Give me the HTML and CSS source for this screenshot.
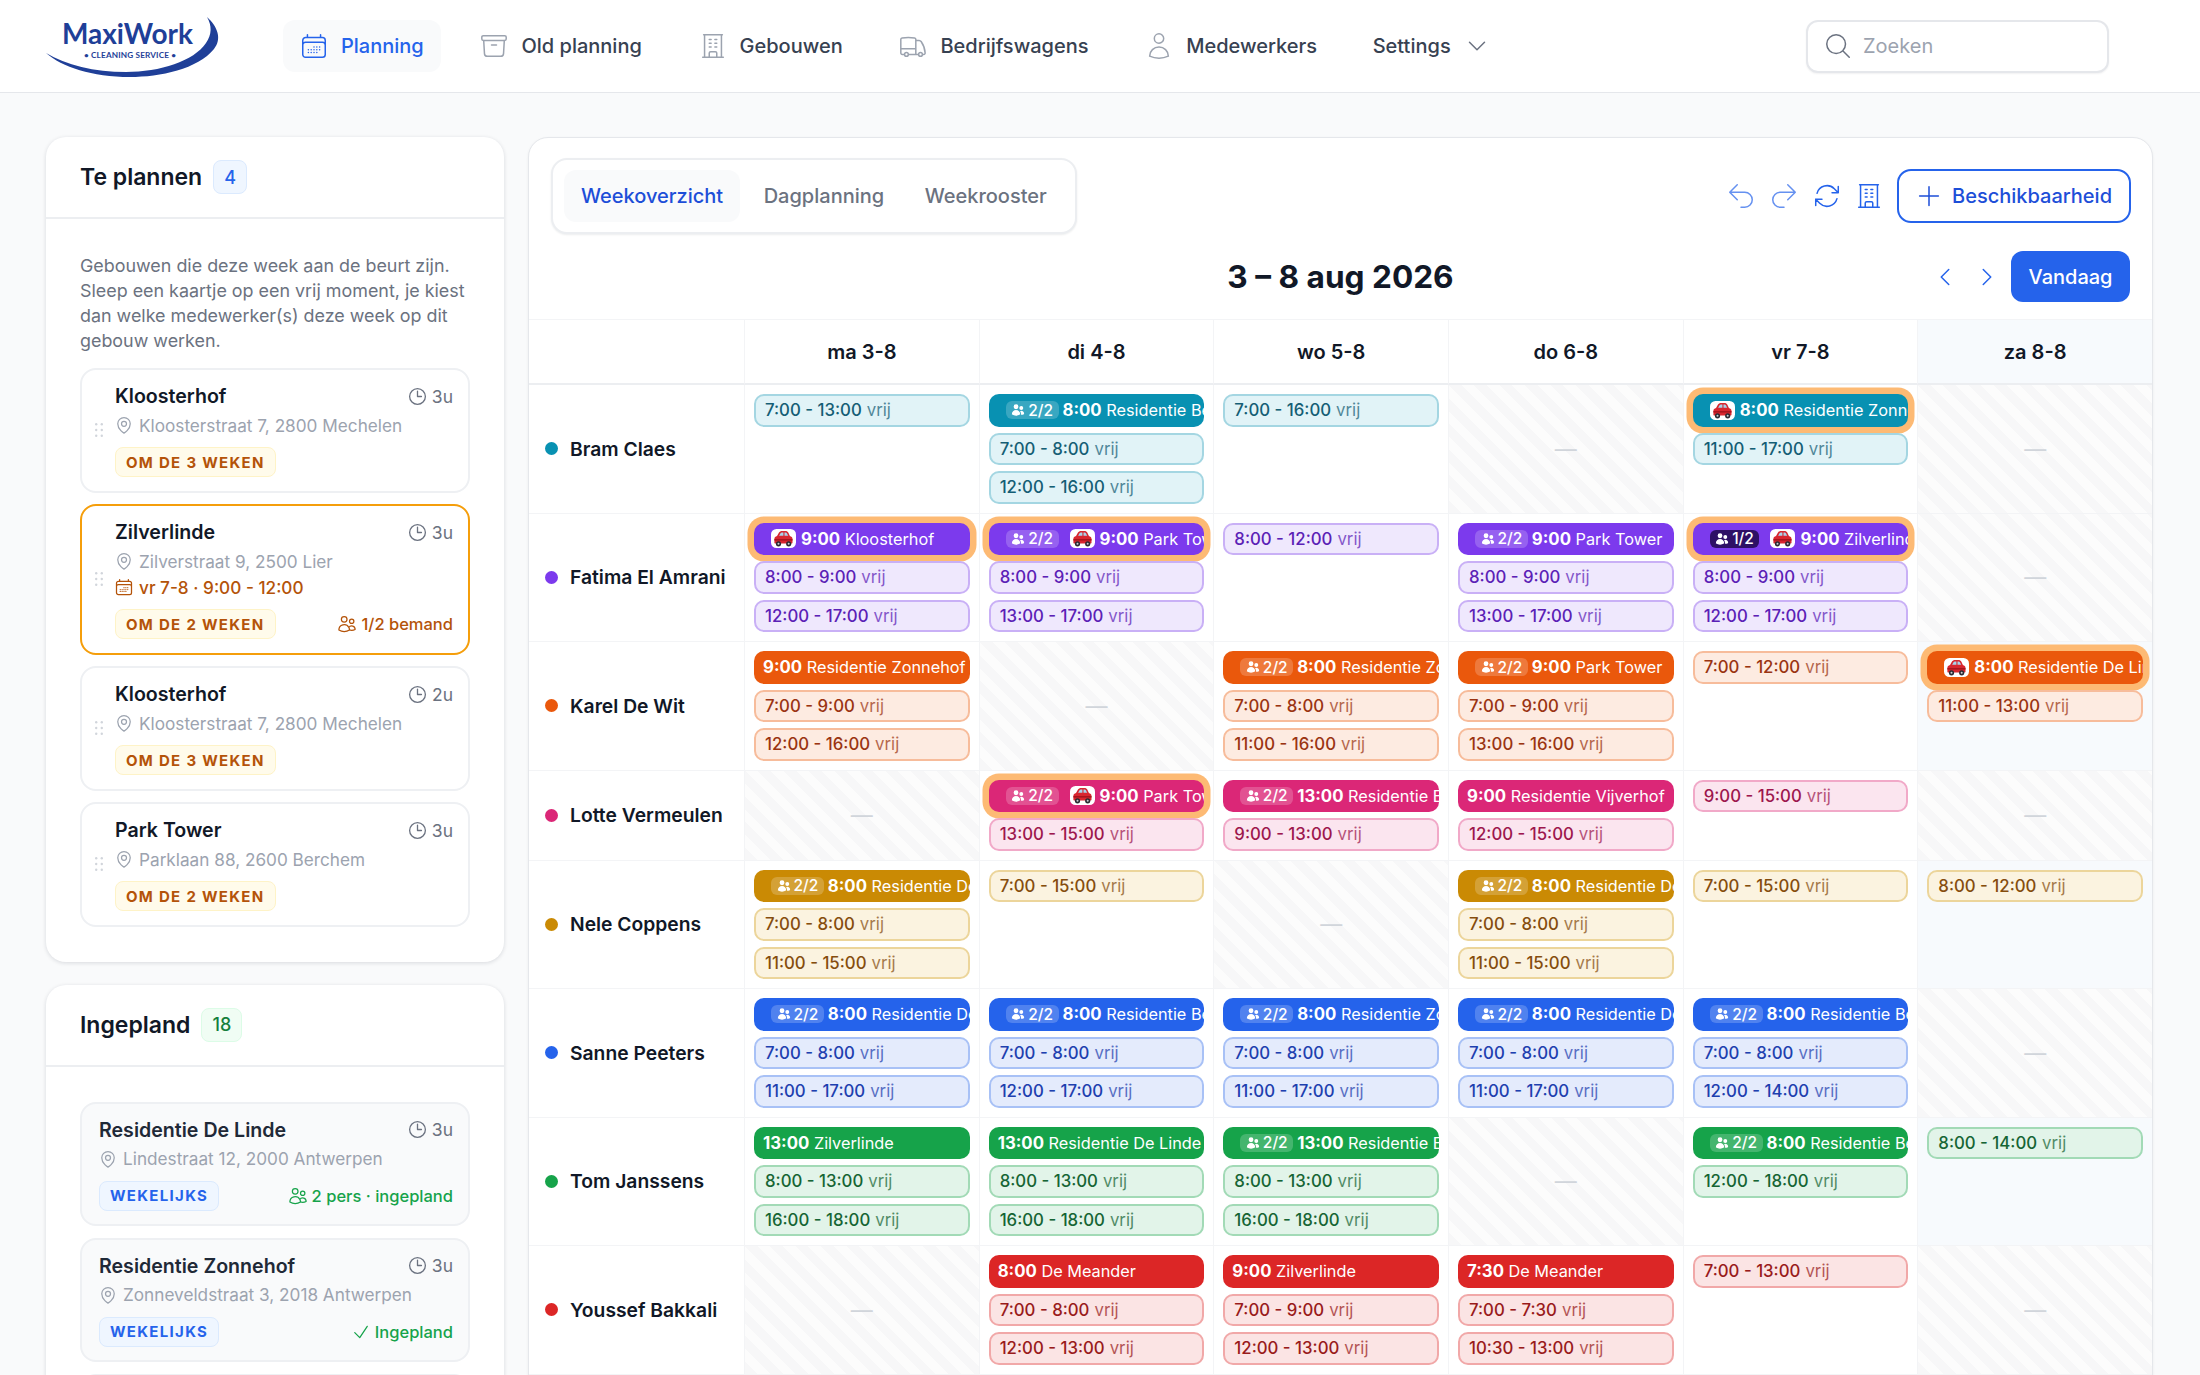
FILE: index.html
```
<!DOCTYPE html>
<html lang="nl">
<head>
<meta charset="utf-8">
<title>MaxiWork Planning</title>
<link rel="stylesheet" href="styles.css">
</head>
<body>
<svg class="defs" width="0" height="0" aria-hidden="true">
  <symbol id="i-cal" viewBox="0 0 24 24"><path d="M6.75 3v2.25M17.25 3v2.25M3 18.75V7.5a2.25 2.25 0 0 1 2.25-2.25h13.5A2.25 2.25 0 0 1 21 7.5v11.25m-18 0A2.25 2.25 0 0 0 5.25 21h13.5A2.25 2.25 0 0 0 21 18.75m-18 0v-7.5A2.25 2.25 0 0 1 5.25 9h13.5A2.25 2.25 0 0 1 21 11.25v7.5m-9-6h.008v.008H12v-.008ZM12 15h.008v.008H12V15Zm0 2.25h.008v.008H12v-.008ZM9.75 15h.008v.008H9.75V15Zm0 2.25h.008v.008H9.75v-.008ZM7.5 15h.008v.008H7.5V15Zm0 2.25h.008v.008H7.5v-.008Zm6.75-4.5h.008v.008h-.008v-.008Zm0 2.25h.008v.008h-.008V15Zm0 2.25h.008v.008h-.008v-.008Zm2.25-4.5h.008v.008H16.5v-.008Zm0 2.25h.008v.008H16.5V15Z"/></symbol>
  <symbol id="i-box" viewBox="0 0 24 24"><path d="m20.25 7.5-.625 10.632a2.25 2.25 0 0 1-2.247 2.118H6.622a2.25 2.25 0 0 1-2.247-2.118L3.75 7.5M10 11.25h4M3.375 7.5h17.25c.621 0 1.125-.504 1.125-1.125v-1.5c0-.621-.504-1.125-1.125-1.125H3.375c-.621 0-1.125.504-1.125 1.125v1.5c0 .621.504 1.125 1.125 1.125Z"/></symbol>
  <symbol id="i-building" viewBox="0 0 24 24"><path d="M3.75 21h16.5M4.5 3h15M5.25 3v18m13.5-18v18M9 6.75h1.5m-1.5 3h1.5m-1.5 3h1.5m3-6H15m-1.5 3H15m-1.5 3H15M9 21v-3.375c0-.621.504-1.125 1.125-1.125h3.75c.621 0 1.125.504 1.125 1.125V21"/></symbol>
  <symbol id="i-truck" viewBox="0 0 24 24"><path d="M8.25 18.75a1.5 1.5 0 0 1-3 0m3 0a1.5 1.5 0 0 0-3 0m3 0h6m-9 0H3.375a1.125 1.125 0 0 1-1.125-1.125V14.25m17.25 4.5a1.5 1.5 0 0 1-3 0m3 0a1.5 1.5 0 0 0-3 0m3 0h1.125c.621 0 1.129-.504 1.09-1.124a17.902 17.902 0 0 0-3.213-9.193 2.056 2.056 0 0 0-1.58-.86H14.25M16.5 18.75h-2.25m0-11.177v-.958c0-.568-.422-1.048-.987-1.106a48.554 48.554 0 0 0-10.026 0 1.106 1.106 0 0 0-.987 1.106v7.635m12-6.677v6.677m0 4.5v-4.5m0 0h-12"/></symbol>
  <symbol id="i-user" viewBox="0 0 24 24"><path d="M15.75 6a3.75 3.75 0 1 1-7.5 0 3.75 3.75 0 0 1 7.5 0ZM4.501 20.118a7.5 7.5 0 0 1 14.998 0A17.933 17.933 0 0 1 12 21.75c-2.676 0-5.216-.584-7.499-1.632Z"/></symbol>
  <symbol id="i-search" viewBox="0 0 24 24"><path d="m21 21-5.197-5.197m0 0A7.5 7.5 0 1 0 5.196 5.196a7.5 7.5 0 0 0 10.607 10.607Z"/></symbol>
  <symbol id="i-down" viewBox="0 0 24 24"><path d="m19.5 8.25-7.5 7.5-7.5-7.5"/></symbol>
  <symbol id="i-left" viewBox="0 0 24 24"><path d="M15.75 19.5 8.25 12l7.5-7.5"/></symbol>
  <symbol id="i-right" viewBox="0 0 24 24"><path d="m8.25 4.5 7.5 7.5-7.5 7.5"/></symbol>
  <symbol id="i-undo" viewBox="0 0 24 24"><path d="M9 15 3 9m0 0 6-6M3 9h12a6 6 0 0 1 0 12h-3"/></symbol>
  <symbol id="i-redo" viewBox="0 0 24 24"><path d="m15 15 6-6m0 0-6-6m6 6H9a6 6 0 0 0 0 12h3"/></symbol>
  <symbol id="i-refresh" viewBox="0 0 24 24"><path d="M16.023 9.348h4.992v-.001M2.985 19.644v-4.992m0 0h4.992m-4.993 0 3.181 3.183a8.25 8.25 0 0 0 13.803-3.7M4.031 9.865a8.25 8.25 0 0 1 13.803-3.7l3.181 3.182m0-4.991v4.99"/></symbol>
  <symbol id="i-plus" viewBox="0 0 24 24"><path d="M12 4.5v15m7.5-7.5h-15"/></symbol>
  <symbol id="i-clock" viewBox="0 0 24 24"><path d="M12 6v6h4.5m4.5 0a9 9 0 1 1-18 0 9 9 0 0 1 18 0Z"/></symbol>
  <symbol id="i-pin" viewBox="0 0 24 24"><path d="M15 10.5a3 3 0 1 1-6 0 3 3 0 0 1 6 0Z"/><path d="M19.5 10.5c0 7.142-7.5 11.25-7.5 11.25S4.5 17.642 4.5 10.5a7.5 7.5 0 1 1 15 0Z"/></symbol>
  <symbol id="i-users" viewBox="0 0 24 24"><path d="M15 19.128a9.38 9.38 0 0 0 2.625.372 9.337 9.337 0 0 0 4.121-.952 4.125 4.125 0 0 0-7.533-2.493M15 19.128v-.003c0-1.113-.285-2.16-.786-3.07M15 19.128v.106A12.318 12.318 0 0 1 8.624 21c-2.331 0-4.512-.645-6.374-1.766l-.001-.109a6.375 6.375 0 0 1 11.964-3.07M12 6.375a3.375 3.375 0 1 1-6.75 0 3.375 3.375 0 0 1 6.75 0Zm8.25 2.25a2.625 2.625 0 1 1-5.25 0 2.625 2.625 0 0 1 5.25 0Z"/></symbol>
  <symbol id="i-check" viewBox="0 0 24 24"><path d="m4.5 12.75 6 6 9-13.5"/></symbol>
  <symbol id="i-crew" viewBox="0 0 24 24"><path d="M4.5 6.375a4.125 4.125 0 1 1 8.25 0 4.125 4.125 0 0 1-8.25 0ZM14.25 8.625a3.375 3.375 0 1 1 6.75 0 3.375 3.375 0 0 1-6.75 0ZM1.5 19.125a7.125 7.125 0 0 1 14.25 0v.003l-.001.119a.75.75 0 0 1-.363.63 13.067 13.067 0 0 1-6.761 1.873c-2.472 0-4.786-.684-6.76-1.873a.75.75 0 0 1-.364-.63l-.001-.122ZM17.25 19.128l-.001.144a2.25 2.25 0 0 1-.233.96 10.088 10.088 0 0 0 5.06-1.01.75.75 0 0 0 .42-.643 4.875 4.875 0 0 0-6.957-4.611 8.586 8.586 0 0 1 1.71 5.157v.003Z"/></symbol>
  <symbol id="i-car" viewBox="0 0 25 19">
    <rect width="25" height="19" rx="5.5" fill="#fff"/>
    <path d="M8 3.600C8.600 2.500 9.700 2 11 2h3.400c1.300 0 2.400.6 3 1.700l1.500 3.300c1.500.4 2.600 1.400 2.600 2.800v3.700c0 .6-.4 1-1 1H4.400c-.6 0-1-.4-1-1V9.800C3.400 8.500 4.500 7.400 6 7z" fill="#d8262f"/>
    <path d="M9.500 4.200c.3-.5.800-.8 1.400-.8h1.500v3.400H8.100zM13.500 3.400h1c.6 0 1.100.3 1.400.8l1.300 2.600h-3.700z" fill="#a9d3ea"/>
    <rect x="3.400" y="10" width="18.100" height="1.600" fill="#a8141d"/>
    <circle cx="7.500" cy="14.800" r="2.600" fill="#2b2b33"/><circle cx="17.700" cy="14.800" r="2.600" fill="#2b2b33"/>
    <circle cx="7.500" cy="14.800" r="1" fill="#c9ccd2"/><circle cx="17.700" cy="14.800" r="1" fill="#c9ccd2"/>
  </symbol>
  <symbol id="i-grip" viewBox="0 0 8 14">
    <circle cx="1.200" cy="1.200" r="1.200"/><circle cx="6.800" cy="1.200" r="1.200"/><circle cx="1.200" cy="7" r="1.200"/><circle cx="6.800" cy="7" r="1.200"/><circle cx="1.200" cy="12.800" r="1.200"/><circle cx="6.800" cy="12.800" r="1.200"/>
  </symbol>
</svg>

<header class="topbar">
  <svg class="logo" viewBox="0 0 240 90" width="240" height="90" role="img" aria-label="MaxiWork Cleaning Service">
    <path class="logo-swoosh" d="M177 16C188 26 192 38 184 48C168 68 130 76 100 76C62 76 32 66 16 52C36 64 64 71 96 71C130 71 164 60 176 42C182 33 182 25 177 16Z"/>
    <text class="logo-name" x="32" y="43" textLength="131">MaxiWork</text>
    <text class="logo-sub" x="54" y="56.500" textLength="92">• CLEANING SERVICE •</text>
  </svg>
  <nav class="nav">
    <a class="nav-item active"><svg class="ic nav-ic"><use href="#i-cal"/></svg>Planning</a>
    <a class="nav-item"><svg class="ic nav-ic"><use href="#i-box"/></svg>Old planning</a>
    <a class="nav-item"><svg class="ic nav-ic"><use href="#i-building"/></svg>Gebouwen</a>
    <a class="nav-item"><svg class="ic nav-ic"><use href="#i-truck"/></svg>Bedrijfswagens</a>
    <a class="nav-item"><svg class="ic nav-ic"><use href="#i-user"/></svg>Medewerkers</a>
    <a class="nav-item">Settings<svg class="ic nav-chev"><use href="#i-down"/></svg></a>
  </nav>
  <div class="search"><svg class="ic search-ic"><use href="#i-search"/></svg><span>Zoeken</span></div>
</header>

<main class="layout">
  <aside class="side">
    <section class="panel">
      <div class="panel-head"><h2>Te plannen</h2><span class="count count-blue">4</span></div>
      <div class="panel-body">
        <p class="intro">Gebouwen die deze week aan de beurt zijn. Sleep een kaartje op een vrij moment, je kiest dan welke medewerker(s) deze week op dit gebouw werken.</p>
        <div class="cards">
          <article class="job">
            <svg class="grip"><use href="#i-grip"/></svg>
            <div class="job-top"><h3>Kloosterhof</h3><span class="dur"><svg class="ic"><use href="#i-clock"/></svg>3u</span></div>
            <div class="addr"><svg class="ic"><use href="#i-pin"/></svg>Kloosterstraat 7, 2800 Mechelen</div>
            <div class="job-meta"><span class="tag tag-amber">OM DE 3 WEKEN</span></div>
          </article>
          <article class="job job-open">
            <svg class="grip"><use href="#i-grip"/></svg>
            <div class="job-top"><h3>Zilverlinde</h3><span class="dur"><svg class="ic"><use href="#i-clock"/></svg>3u</span></div>
            <div class="addr"><svg class="ic"><use href="#i-pin"/></svg>Zilverstraat 9, 2500 Lier</div>
            <div class="when"><svg class="ic"><use href="#i-cal"/></svg>vr 7-8 · 9:00 - 12:00</div>
            <div class="job-meta"><span class="tag tag-amber">OM DE 2 WEKEN</span><span class="state state-amber"><svg class="ic"><use href="#i-users"/></svg>1/2 bemand</span></div>
          </article>
          <article class="job">
            <svg class="grip"><use href="#i-grip"/></svg>
            <div class="job-top"><h3>Kloosterhof</h3><span class="dur"><svg class="ic"><use href="#i-clock"/></svg>2u</span></div>
            <div class="addr"><svg class="ic"><use href="#i-pin"/></svg>Kloosterstraat 7, 2800 Mechelen</div>
            <div class="job-meta"><span class="tag tag-amber">OM DE 3 WEKEN</span></div>
          </article>
          <article class="job">
            <svg class="grip"><use href="#i-grip"/></svg>
            <div class="job-top"><h3>Park Tower</h3><span class="dur"><svg class="ic"><use href="#i-clock"/></svg>3u</span></div>
            <div class="addr"><svg class="ic"><use href="#i-pin"/></svg>Parklaan 88, 2600 Berchem</div>
            <div class="job-meta"><span class="tag tag-amber">OM DE 2 WEKEN</span></div>
          </article>
        </div>
      </div>
    </section>
    <section class="panel">
      <div class="panel-head"><h2>Ingepland</h2><span class="count count-green">18</span></div>
      <div class="panel-body panel-body-done">
        <div class="cards">
          <article class="job job-done">
            <div class="job-top"><h3>Residentie De Linde</h3><span class="dur"><svg class="ic"><use href="#i-clock"/></svg>3u</span></div>
            <div class="addr"><svg class="ic"><use href="#i-pin"/></svg>Lindestraat 12, 2000 Antwerpen</div>
            <div class="job-meta"><span class="tag tag-blue">WEKELIJKS</span><span class="state state-green"><svg class="ic"><use href="#i-users"/></svg>2 pers · ingepland</span></div>
          </article>
          <article class="job job-done">
            <div class="job-top"><h3>Residentie Zonnehof</h3><span class="dur"><svg class="ic"><use href="#i-clock"/></svg>3u</span></div>
            <div class="addr"><svg class="ic"><use href="#i-pin"/></svg>Zonneveldstraat 3, 2018 Antwerpen</div>
            <div class="job-meta"><span class="tag tag-blue">WEKELIJKS</span><span class="state state-green"><svg class="ic"><use href="#i-check"/></svg>Ingepland</span></div>
          </article>
          <article class="job job-done"></article>
        </div>
      </div>
    </section>
  </aside>

  <section class="board">
    <div class="toolbar">
      <div class="tabs"><a class="tab active">Weekoverzicht</a><a class="tab">Dagplanning</a><a class="tab">Weekrooster</a></div>
      <div class="tools">
        <svg class="ic tool tool-soft"><use href="#i-undo"/></svg>
        <svg class="ic tool tool-soft"><use href="#i-redo"/></svg>
        <svg class="ic tool"><use href="#i-refresh"/></svg>
        <svg class="ic tool"><use href="#i-building"/></svg>
        <button class="btn-outline"><svg class="ic"><use href="#i-plus"/></svg>Beschikbaarheid</button>
      </div>
    </div>
    <div class="daterow">
      <span></span>
      <h1>3 – 8 aug 2026</h1>
      <div class="datenav">
        <svg class="ic"><use href="#i-left"/></svg>
        <svg class="ic"><use href="#i-right"/></svg>
        <button class="btn-solid">Vandaag</button>
      </div>
    </div>

    <div class="grid">
      <div class="hd"></div><div class="hd">ma 3-8</div><div class="hd">di 4-8</div><div class="hd">wo 5-8</div><div class="hd">do 6-8</div><div class="hd">vr 7-8</div><div class="hd sat">za 8-8</div>

      <div class="row teal">
        <div class="who"><i></i>Bram Claes</div>
        <div class="cell"><div class="chip"><b>7:00 - 13:00</b> <span>vrij</span></div></div>
        <div class="cell"><div class="chip busy"><em class="crew"><svg><use href="#i-crew"/></svg>2/2</em><span class="txt"><b>8:00</b> Residentie Bellevue</span></div><div class="chip"><b>7:00 - 8:00</b> <span>vrij</span></div><div class="chip"><b>12:00 - 16:00</b> <span>vrij</span></div></div>
        <div class="cell"><div class="chip"><b>7:00 - 16:00</b> <span>vrij</span></div></div>
        <div class="cell off">—</div>
        <div class="cell"><div class="chip busy ring"><svg class="car"><use href="#i-car"/></svg><span class="txt"><b>8:00</b> Residentie Zonnehof</span></div><div class="chip"><b>11:00 - 17:00</b> <span>vrij</span></div></div>
        <div class="cell off">—</div>
      </div>

      <div class="row purple">
        <div class="who"><i></i>Fatima El Amrani</div>
        <div class="cell"><div class="chip busy ring"><svg class="car"><use href="#i-car"/></svg><span class="txt"><b>9:00</b> Kloosterhof</span></div><div class="chip"><b>8:00 - 9:00</b> <span>vrij</span></div><div class="chip"><b>12:00 - 17:00</b> <span>vrij</span></div></div>
        <div class="cell"><div class="chip busy ring"><em class="crew"><svg><use href="#i-crew"/></svg>2/2</em><svg class="car"><use href="#i-car"/></svg><span class="txt"><b>9:00</b> Park Tower</span></div><div class="chip"><b>8:00 - 9:00</b> <span>vrij</span></div><div class="chip"><b>13:00 - 17:00</b> <span>vrij</span></div></div>
        <div class="cell"><div class="chip"><b>8:00 - 12:00</b> <span>vrij</span></div></div>
        <div class="cell"><div class="chip busy"><em class="crew"><svg><use href="#i-crew"/></svg>2/2</em><span class="txt"><b>9:00</b> Park Tower</span></div><div class="chip"><b>8:00 - 9:00</b> <span>vrij</span></div><div class="chip"><b>13:00 - 17:00</b> <span>vrij</span></div></div>
        <div class="cell"><div class="chip busy ring"><em class="crew crew-short"><svg><use href="#i-crew"/></svg>1/2</em><svg class="car"><use href="#i-car"/></svg><span class="txt"><b>9:00</b> Zilverlinde</span></div><div class="chip"><b>8:00 - 9:00</b> <span>vrij</span></div><div class="chip"><b>12:00 - 17:00</b> <span>vrij</span></div></div>
        <div class="cell off">—</div>
      </div>

      <div class="row orange">
        <div class="who"><i></i>Karel De Wit</div>
        <div class="cell"><div class="chip busy"><span class="txt"><b>9:00</b> Residentie Zonnehof</span></div><div class="chip"><b>7:00 - 9:00</b> <span>vrij</span></div><div class="chip"><b>12:00 - 16:00</b> <span>vrij</span></div></div>
        <div class="cell off">—</div>
        <div class="cell"><div class="chip busy"><em class="crew"><svg><use href="#i-crew"/></svg>2/2</em><span class="txt"><b>8:00</b> Residentie Zonnehof</span></div><div class="chip"><b>7:00 - 8:00</b> <span>vrij</span></div><div class="chip"><b>11:00 - 16:00</b> <span>vrij</span></div></div>
        <div class="cell"><div class="chip busy"><em class="crew"><svg><use href="#i-crew"/></svg>2/2</em><span class="txt"><b>9:00</b> Park Tower</span></div><div class="chip"><b>7:00 - 9:00</b> <span>vrij</span></div><div class="chip"><b>13:00 - 16:00</b> <span>vrij</span></div></div>
        <div class="cell"><div class="chip"><b>7:00 - 12:00</b> <span>vrij</span></div></div>
        <div class="cell sat"><div class="chip busy ring"><svg class="car"><use href="#i-car"/></svg><span class="txt"><b>8:00</b> Residentie De Linde</span></div><div class="chip"><b>11:00 - 13:00</b> <span>vrij</span></div></div>
      </div>

      <div class="row pink">
        <div class="who"><i></i>Lotte Vermeulen</div>
        <div class="cell off">—</div>
        <div class="cell"><div class="chip busy ring"><em class="crew"><svg><use href="#i-crew"/></svg>2/2</em><svg class="car"><use href="#i-car"/></svg><span class="txt"><b>9:00</b> Park Tower</span></div><div class="chip"><b>13:00 - 15:00</b> <span>vrij</span></div></div>
        <div class="cell"><div class="chip busy"><em class="crew"><svg><use href="#i-crew"/></svg>2/2</em><span class="txt"><b>13:00</b> Residentie Bellevue</span></div><div class="chip"><b>9:00 - 13:00</b> <span>vrij</span></div></div>
        <div class="cell"><div class="chip busy"><span class="txt"><b>9:00</b> Residentie Vijverhof</span></div><div class="chip"><b>12:00 - 15:00</b> <span>vrij</span></div></div>
        <div class="cell"><div class="chip"><b>9:00 - 15:00</b> <span>vrij</span></div></div>
        <div class="cell off">—</div>
      </div>

      <div class="row amber">
        <div class="who"><i></i>Nele Coppens</div>
        <div class="cell"><div class="chip busy"><em class="crew"><svg><use href="#i-crew"/></svg>2/2</em><span class="txt"><b>8:00</b> Residentie De Linde</span></div><div class="chip"><b>7:00 - 8:00</b> <span>vrij</span></div><div class="chip"><b>11:00 - 15:00</b> <span>vrij</span></div></div>
        <div class="cell"><div class="chip"><b>7:00 - 15:00</b> <span>vrij</span></div></div>
        <div class="cell off">—</div>
        <div class="cell"><div class="chip busy"><em class="crew"><svg><use href="#i-crew"/></svg>2/2</em><span class="txt"><b>8:00</b> Residentie De Linde</span></div><div class="chip"><b>7:00 - 8:00</b> <span>vrij</span></div><div class="chip"><b>11:00 - 15:00</b> <span>vrij</span></div></div>
        <div class="cell"><div class="chip"><b>7:00 - 15:00</b> <span>vrij</span></div></div>
        <div class="cell sat"><div class="chip"><b>8:00 - 12:00</b> <span>vrij</span></div></div>
      </div>

      <div class="row blue">
        <div class="who"><i></i>Sanne Peeters</div>
        <div class="cell"><div class="chip busy"><em class="crew"><svg><use href="#i-crew"/></svg>2/2</em><span class="txt"><b>8:00</b> Residentie De Linde</span></div><div class="chip"><b>7:00 - 8:00</b> <span>vrij</span></div><div class="chip"><b>11:00 - 17:00</b> <span>vrij</span></div></div>
        <div class="cell"><div class="chip busy"><em class="crew"><svg><use href="#i-crew"/></svg>2/2</em><span class="txt"><b>8:00</b> Residentie Bellevue</span></div><div class="chip"><b>7:00 - 8:00</b> <span>vrij</span></div><div class="chip"><b>12:00 - 17:00</b> <span>vrij</span></div></div>
        <div class="cell"><div class="chip busy"><em class="crew"><svg><use href="#i-crew"/></svg>2/2</em><span class="txt"><b>8:00</b> Residentie Zonnehof</span></div><div class="chip"><b>7:00 - 8:00</b> <span>vrij</span></div><div class="chip"><b>11:00 - 17:00</b> <span>vrij</span></div></div>
        <div class="cell"><div class="chip busy"><em class="crew"><svg><use href="#i-crew"/></svg>2/2</em><span class="txt"><b>8:00</b> Residentie De Linde</span></div><div class="chip"><b>7:00 - 8:00</b> <span>vrij</span></div><div class="chip"><b>11:00 - 17:00</b> <span>vrij</span></div></div>
        <div class="cell"><div class="chip busy"><em class="crew"><svg><use href="#i-crew"/></svg>2/2</em><span class="txt"><b>8:00</b> Residentie Bellevue</span></div><div class="chip"><b>7:00 - 8:00</b> <span>vrij</span></div><div class="chip"><b>12:00 - 14:00</b> <span>vrij</span></div></div>
        <div class="cell off">—</div>
      </div>

      <div class="row green">
        <div class="who"><i></i>Tom Janssens</div>
        <div class="cell"><div class="chip busy"><span class="txt"><b>13:00</b> Zilverlinde</span></div><div class="chip"><b>8:00 - 13:00</b> <span>vrij</span></div><div class="chip"><b>16:00 - 18:00</b> <span>vrij</span></div></div>
        <div class="cell"><div class="chip busy"><span class="txt"><b>13:00</b> Residentie De Linde</span></div><div class="chip"><b>8:00 - 13:00</b> <span>vrij</span></div><div class="chip"><b>16:00 - 18:00</b> <span>vrij</span></div></div>
        <div class="cell"><div class="chip busy"><em class="crew"><svg><use href="#i-crew"/></svg>2/2</em><span class="txt"><b>13:00</b> Residentie Bellevue</span></div><div class="chip"><b>8:00 - 13:00</b> <span>vrij</span></div><div class="chip"><b>16:00 - 18:00</b> <span>vrij</span></div></div>
        <div class="cell off">—</div>
        <div class="cell"><div class="chip busy"><em class="crew"><svg><use href="#i-crew"/></svg>2/2</em><span class="txt"><b>8:00</b> Residentie Bellevue</span></div><div class="chip"><b>12:00 - 18:00</b> <span>vrij</span></div></div>
        <div class="cell sat"><div class="chip"><b>8:00 - 14:00</b> <span>vrij</span></div></div>
      </div>

      <div class="row red">
        <div class="who"><i></i>Youssef Bakkali</div>
        <div class="cell off">—</div>
        <div class="cell"><div class="chip busy"><span class="txt"><b>8:00</b> De Meander</span></div><div class="chip"><b>7:00 - 8:00</b> <span>vrij</span></div><div class="chip"><b>12:00 - 13:00</b> <span>vrij</span></div></div>
        <div class="cell"><div class="chip busy"><span class="txt"><b>9:00</b> Zilverlinde</span></div><div class="chip"><b>7:00 - 9:00</b> <span>vrij</span></div><div class="chip"><b>12:00 - 13:00</b> <span>vrij</span></div></div>
        <div class="cell"><div class="chip busy"><span class="txt"><b>7:30</b> De Meander</span></div><div class="chip"><b>7:00 - 7:30</b> <span>vrij</span></div><div class="chip"><b>10:30 - 13:00</b> <span>vrij</span></div></div>
        <div class="cell"><div class="chip"><b>7:00 - 13:00</b> <span>vrij</span></div></div>
        <div class="cell off">—</div>
      </div>
    </div>
  </section>
</main>
</body>
</html>
```

FILE: styles.css
```
* { box-sizing: border-box; }
html, body { margin: 0; height: 1375px; overflow: hidden; }
body { background: #f9fafb; color: #111827; font-family: Inter, "Noto Sans", sans-serif; font-size: 18px; }
h1, h2, h3, p { margin: 0; }
.defs { position: absolute; }
.ic { width: 24px; height: 24px; fill: none; stroke: currentColor; stroke-width: 1.5; stroke-linecap: round; stroke-linejoin: round; flex-shrink: 0; }

/* top bar */
.topbar { display: flex; align-items: center; height: 93px; padding-left: 30px; background: #fff; border-bottom: 1px solid #e5e7eb; }
.logo { flex-shrink: 0; }
.logo-swoosh { fill: #1f3f98; }
.logo-name { font-family: Lato, sans-serif; font-weight: 700; font-size: 28px; fill: #1f3f98; }
.logo-sub { font-family: Lato, sans-serif; font-weight: 700; font-size: 8.200px; fill: #1f3f98; }
.nav { display: flex; align-items: center; gap: 22.700px; margin-left: 13px; }
.nav-item { display: flex; align-items: center; gap: 12px; height: 52px; padding: 0 17px 0 16px; border-radius: 12px; font-size: 20px; font-weight: 500; color: #374151; }
.nav-item.active { background: #f9fafb; color: #2563eb; }
.nav-ic { width: 30px; height: 30px; stroke-width: 1.2; color: #9ca3af; }
.active .nav-ic { color: #2563eb; }
.nav-chev { width: 24px; height: 24px; margin-left: 2px; color: #6b7280; }
.search { display: flex; align-items: center; gap: 10px; width: 303px; height: 53px; margin-left: auto; margin-right: 91px; padding: 0 15px; background: #fff; border: 2px solid #e5e7eb; border-radius: 12px; box-shadow: 0 1px 2px rgba(17, 24, 39, .06); font-size: 20px; color: #9ca3af; }
.search-ic { width: 30px; height: 30px; stroke-width: 1.2; color: #6b7280; }

/* layout */
.layout { display: flex; align-items: flex-start; gap: 24px; padding: 44px 47px 0 46px; }
.side { display: flex; flex-direction: column; gap: 23px; width: 458px; flex-shrink: 0; }
.panel { background: #fff; border-radius: 20px; box-shadow: 0 1px 4px rgba(17, 24, 39, .14); }
.panel-head { display: flex; align-items: center; gap: 11px; height: 82px; padding: 0 34px; border-bottom: 2px solid #eceef1; }
.panel-head h2 { font-size: 23px; font-weight: 600; color: #111827; }
.count { display: flex; align-items: center; justify-content: center; height: 34px; min-width: 33px; padding: 0 10px; border-radius: 8px; font-size: 18px; font-weight: 500; }
.count-blue { background: #eff6ff; border: 1px solid #dbeafe; color: #2563eb; }
.count-green { background: #f0fdf4; border: 1px solid #dcfce7; color: #15803d; }
.panel-body { padding: 34px 34px 35px; }
.panel-body-done { padding-top: 35px; padding-bottom: 0; }
.intro { margin-bottom: 15px; font-size: 17.900px; line-height: 25px; color: #6b7280; }
.cards { display: flex; flex-direction: column; gap: 11.500px; }

.job { position: relative; padding: 13px 15px 13.500px 33px; background: #fff; border: 2px solid #eef0f3; border-radius: 16px; }
.job-open { border-color: #f59e0b; }
.job-done { padding-left: 17px; background: #f9fafb; min-height: 124px; }
.grip { position: absolute; left: 13px; top: 50%; width: 8px; height: 14px; margin-top: -7px; fill: #d1d5db; }
.job-top { display: flex; align-items: center; justify-content: space-between; height: 26px; }
.job-top h3 { font-size: 19.600px; font-weight: 600; color: #111827; }
.job-done h3 { color: #1f2937; }
.dur { display: flex; align-items: center; gap: 4px; font-size: 17.500px; color: #6b7280; }
.dur .ic { width: 21px; height: 21px; }
.addr, .when { display: flex; align-items: center; gap: 5px; height: 24px; margin-top: 4px; font-size: 17.200px; color: #9ca3af; }
.addr .ic, .when .ic { width: 20px; height: 20px; margin-left: -1px; }
.when { margin-top: 2px; font-weight: 500; color: #b45309; }
.job-meta { display: flex; align-items: center; justify-content: space-between; margin-top: 10px; }
.tag { display: inline-flex; align-items: center; height: 30px; padding: 0 10px; border-radius: 8px; font-size: 15px; font-weight: 700; letter-spacing: 1.300px; }
.tag-amber { background: #fffbeb; border: 1px solid #fef3c7; color: #b45309; }
.tag-blue { background: #eff6ff; border: 1px solid #dbeafe; color: #2563eb; }
.state { display: flex; align-items: center; gap: 4px; font-size: 16.500px; font-weight: 500; }
.state .ic { width: 20px; height: 20px; }
.state-amber { color: #b45309; }
.state-green { color: #16a34a; }

/* board */
.board { flex: 1; min-width: 0; padding: 20px 0 24px; background: #fff; border: 1px solid #e5e7eb; border-radius: 20px; box-shadow: 0 1px 3px rgba(17, 24, 39, .06); }
.toolbar { display: flex; align-items: center; justify-content: space-between; padding: 0 21px 0 22px; }
.tabs { display: flex; align-items: center; gap: 6.500px; height: 76px; padding: 0 11px; background: #fff; border: 2px solid #eceef1; border-radius: 16px; box-shadow: 0 1px 2px rgba(17, 24, 39, .08); }
.tab { display: flex; align-items: center; height: 52px; padding: 0 17px; border-radius: 12px; font-size: 20px; font-weight: 500; color: #6b7280; }
.tab.active { background: #f9fafb; color: #1d4ed8; }
.tools { display: flex; align-items: center; gap: 12.700px; color: #2563eb; }
.tool { width: 30px; height: 30px; stroke-width: 1.2; }
.tool-soft { opacity: .7; }
.btn-outline { display: flex; align-items: center; gap: 8px; height: 54px; margin-left: 0; padding: 0 17px 0 15px; background: #fff; border: 2px solid #2563eb; border-radius: 14px; font: 500 20px Inter, sans-serif; color: #1d4ed8; }
.btn-outline .ic { width: 30px; height: 30px; stroke-width: 1.2; }
.daterow { display: grid; grid-template-columns: 1fr auto 1fr; align-items: center; height: 51px; margin: 17px 0; padding: 0 22px; }
.daterow h1 { font-size: 31.600px; font-weight: 700; color: #111827; }
.datenav { display: flex; align-items: center; justify-content: flex-end; gap: 18px; color: #2563eb; }
.datenav .ic { width: 24px; height: 24px; }
.btn-solid { height: 51px; padding: 0 17.500px; margin-left: -6px; background: #2563eb; border: 0; border-radius: 12px; font: 500 20px Inter, sans-serif; color: #fff; }

/* grid */
.grid { display: grid; grid-template-columns: 215px repeat(6, 1fr); border-top: 1px solid #f3f4f6; }
.hd { display: flex; align-items: center; justify-content: center; height: 65px; border-left: 1px solid #f3f4f6; border-bottom: 2px solid #eceef1; font-size: 20px; font-weight: 600; color: #111827; }
.hd:first-child { border-left: 0; }
.hd.sat { background: #f7fafd; }
.row { display: contents; }
.who { display: flex; align-items: center; gap: 12px; padding-left: 16px; border-bottom: 1px solid #f3f4f6; font-size: 19.300px; font-weight: 600; color: #111827; }
.who i { width: 13px; height: 13px; border-radius: 50%; background: var(--solid); }
.cell { display: flex; flex-direction: column; gap: 6px; min-width: 0; padding: 9px; border-left: 1px solid #f3f4f6; border-bottom: 1px solid #f3f4f6; }
.cell.sat { background: #f7fafd; }
.cell.off { align-items: center; justify-content: center; background: repeating-linear-gradient(45deg, #f7f7f8 0 9px, #fcfcfc 9px 18px); font-size: 22px; color: #d1d5db; }
.chip { display: flex; align-items: center; flex-shrink: 0; height: 32.500px; padding: 0 9px; overflow: hidden; white-space: nowrap; background: var(--light); border: 2px solid var(--line); border-radius: 10px; font-size: 16.800px; color: var(--ink); }
.chip b { font-weight: 500; }
.chip > span { margin-left: 5px; opacity: .72; }
.chip.busy { padding: 0 10px 0 9px; background: var(--solid); border: 0; color: #fff; }
.chip.busy b { font-size: 16.800px; font-weight: 700; }
.chip.busy .txt { margin-left: 0; opacity: 1; flex-shrink: 0; font-size: 16.300px; font-weight: 400; }
.chip.ring { box-shadow: 0 0 0 6.500px #fdba74; }
.crew { display: inline-flex; align-items: center; gap: 3px; flex-shrink: 0; height: 18px; padding: 0 5.500px; margin: 0 4px 0 8px; background: rgba(255, 255, 255, .2); border-radius: 6px; font-style: normal; font-size: 15.500px; font-weight: 500; }
.crew svg { width: 14px; height: 14px; fill: #fff; }
.crew-short { background: #2e1065; }
.car { flex-shrink: 0; width: 25px; height: 19px; margin: 0 5px 0 8px; }
.crew + .car { margin-left: 7px; }

.teal { --solid: #0891b2; --light: #e1f3f7; --line: #a4d6e2; --ink: #155e75; }
.purple { --solid: #7c3aed; --light: #efe8fd; --line: #c9b0f6; --ink: #5b21b6; }
.orange { --solid: #ea580c; --light: #fdebe1; --line: #f7bc9b; --ink: #9a3412; }
.pink { --solid: #db2777; --light: #fbe5ef; --line: #f1a9c8; --ink: #9d174d; }
.amber { --solid: #ca8a04; --light: #fbf3e0; --line: #ecd59b; --ink: #854d0e; }
.blue { --solid: #2563eb; --light: #e4ebfc; --line: #a8c1f6; --ink: #1e40af; }
.green { --solid: #16a34a; --light: #e2f4e9; --line: #a2dab6; --ink: #166534; }
.red { --solid: #dc2626; --light: #fbe4e4; --line: #f1a8a8; --ink: #991b1b; }
```
